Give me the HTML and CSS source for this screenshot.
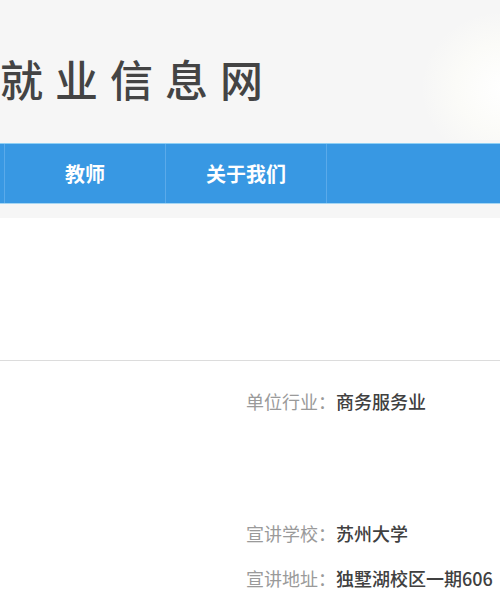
FILE: index.html
```html
<!DOCTYPE html>
<html lang="zh-CN">
<head>
  <meta charset="UTF-8" />
  <meta name="viewport" content="width=device-width, initial-scale=1.0"/>
  <title>就业信息网</title>
  <link rel="stylesheet" href="styles.css">
</head>
<body>
  <div class="header">
    <h1 class="site-title">就业信息网</h1>
    <div class="header-art"></div>
  </div>

  <div class="nav">
    <a class="nav-item nav-edge" href="#"></a>
    <a class="nav-item" href="#">教师</a>
    <a class="nav-item" href="#">关于我们</a>
  </div>
  <div class="nav-shadow"></div>

  <div class="content">
    <div class="divider"></div>

    <div class="info">
      <div class="info-row row-industry">
        <span class="label">单位行业：</span><span class="value">商务服务业</span>
      </div>
      <div class="info-row row-school">
        <span class="label">宣讲学校：</span><span class="value">苏州大学</span>
      </div>
      <div class="info-row">
        <span class="label">宣讲地址：</span><span class="value">独墅湖校区一期606</span>
      </div>
    </div>
  </div>
</body>
</html>
```

FILE: styles.css
```css
body {
  margin: 0;
  width: 500px;
  overflow: hidden;
  font-family: "Noto Sans CJK SC", "Noto Sans", sans-serif;
  background: #ffffff;
}

.header {
  position: relative;
  height: 143px;
  background: #f6f6f6;
  display: flex;
  align-items: center;
  overflow: hidden;
}

.site-title {
  margin: 0;
  padding-top: 14px;
  font-size: 43px;
  font-weight: 500;
  letter-spacing: 12px;
  color: #444444;
  line-height: 1;
}

.header-art {
  position: absolute;
  right: -40px;
  top: 10px;
  width: 120px;
  height: 130px;
  background: radial-gradient(ellipse at 70% 60%, #ffffff 0%, #fbfbf8 40%, rgba(246, 246, 246, 0) 70%);
}

.nav {
  display: flex;
  height: 61px;
  background: #3898e3;
  border-top: 1px solid #8fd0f5;
  border-bottom: 1px solid #a6d6f3;
  box-sizing: border-box;
}

.nav-item {
  width: 160px;
  display: flex;
  justify-content: center;
  align-items: center;
  border-right: 1px solid #5aaaea;
  color: #ffffff;
  font-size: 20px;
  font-weight: 700;
  text-decoration: none;
}

.nav-edge {
  width: 4px;
}

.nav-shadow {
  height: 14px;
  background: #f6f6f6;
}

.divider {
  margin-top: 142px;
  height: 1px;
  background: #dcdcdc;
}

.info {
  padding-left: 246px;
  padding-top: 28px;
}

.info-row {
  font-size: 18px;
  line-height: 24px;
  white-space: nowrap;
}

.row-industry {
  margin-bottom: 108px;
}

.row-school {
  margin-bottom: 21px;
}

.label {
  color: #9a9a9a;
}

.value {
  color: #404040;
  font-weight: 500;
}
```
